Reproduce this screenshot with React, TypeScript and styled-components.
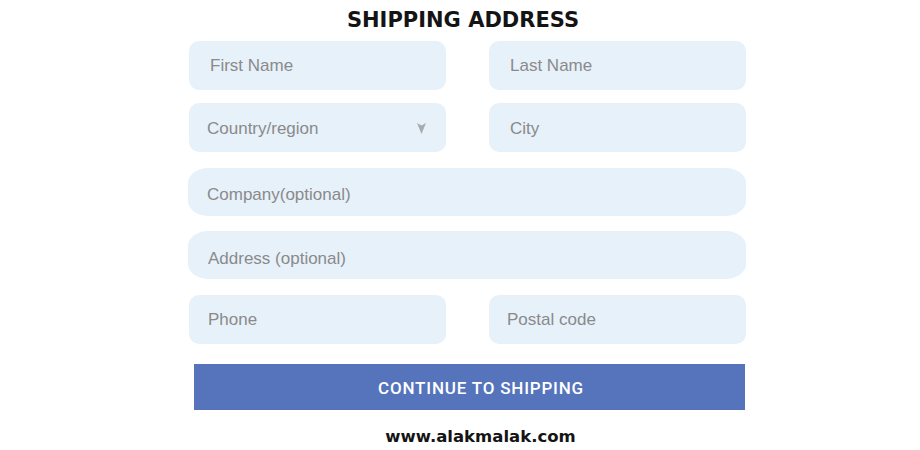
import React from "react";
import styled, { createGlobalStyle } from "styled-components";

const GlobalStyle = createGlobalStyle`
  body {
    margin: 0;
    background: #ffffff;
    font-family: "Liberation Sans", Arial, sans-serif;
  }
`;

const StyledPage = styled.div`
  width: 920px;
  height: 450px;
  overflow: hidden;
`;

const StyledForm = styled.form`
  display: flex;
  flex-direction: column;
  width: 558px;
  margin-left: 188px;
  padding-top: 7px;
`;

const StyledTitle = styled.h2`
  margin: 0;
  padding-right: 8px;
  text-align: center;
  font-family: "DejaVu Sans", "Liberation Sans", sans-serif;
  font-weight: 700;
  font-size: 21px;
  line-height: 26px;
  color: #141414;
`;

const StyledRow = styled.div<{ $top: number }>`
  display: grid;
  grid-template-columns: 1fr 1fr;
  column-gap: 43px;
  margin-top: ${(p) => p.$top}px;
  padding-left: 1px;
`;

const StyledWideRow = styled.div<{ $top: number }>`
  margin-top: ${(p) => p.$top}px;
`;

const StyledField = styled.div<{ $wide?: boolean; $pad?: number; $shift?: number }>`
  display: flex;
  align-items: center;
  justify-content: space-between;
  height: ${(p) => (p.$wide ? 48 : 49)}px;
  padding: ${(p) => (p.$shift ?? 0) * 2}px 18px 0 ${(p) => p.$pad ?? 21}px;
  background: #e7f1fa;
  border-radius: ${(p) => (p.$wide ? "20px / 15px" : "10px")};
  color: #8a8a8a;
  font-size: 17px;
  box-sizing: border-box;
`;

const StyledArrow = styled.svg`
  width: 9px;
  height: 11px;
  margin-right: 2px;
  fill: #ababab;
`;

const StyledButton = styled.button`
  display: block;
  width: 551px;
  height: 46px;
  margin: 20px 0 0 6px;
  padding: 2px 0 0 23px;
  border: none;
  background: #5674bb;
  color: #ffffff;
  font-family: Roboto, "Liberation Sans", sans-serif;
  font-weight: 500;
  font-size: 17px;
  letter-spacing: 0.8px;
  text-transform: uppercase;
  cursor: pointer;
`;

const StyledFooter = styled.p`
  margin: 17px 0 0;
  padding-left: 27px;
  text-align: center;
  font-family: "DejaVu Sans", "Liberation Sans", sans-serif;
  font-weight: 700;
  font-size: 16.5px;
  line-height: 20px;
  color: #141414;
`;

function Arrow() {
  return (
    <StyledArrow viewBox="0 0 9 11">
      <path d="M0 0 L4.5 2.5 L9 0 L4.5 11 Z" />
    </StyledArrow>
  );
}

export default function App() {
  return (
    <StyledPage>
      <GlobalStyle />
      <StyledForm>
        <StyledTitle>SHIPPING ADDRESS</StyledTitle>
        <StyledRow $top={8}>
          <StyledField>First Name</StyledField>
          <StyledField>Last Name</StyledField>
        </StyledRow>
        <StyledRow $top={13}>
          <StyledField $pad={18} $shift={1}>
            Country/region
            <Arrow />
          </StyledField>
          <StyledField $shift={1}>City</StyledField>
        </StyledRow>
        <StyledWideRow $top={16}>
          <StyledField $wide $pad={19} $shift={3}>
            Company(optional)
          </StyledField>
        </StyledWideRow>
        <StyledWideRow $top={15}>
          <StyledField $wide $pad={20} $shift={4}>
            Address (optional)
          </StyledField>
        </StyledWideRow>
        <StyledRow $top={16}>
          <StyledField $pad={19}>Phone</StyledField>
          <StyledField $pad={18}>Postal code</StyledField>
        </StyledRow>
        <StyledButton type="button">Continue to shipping</StyledButton>
        <StyledFooter>www.alakmalak.com</StyledFooter>
      </StyledForm>
    </StyledPage>
  );
}
